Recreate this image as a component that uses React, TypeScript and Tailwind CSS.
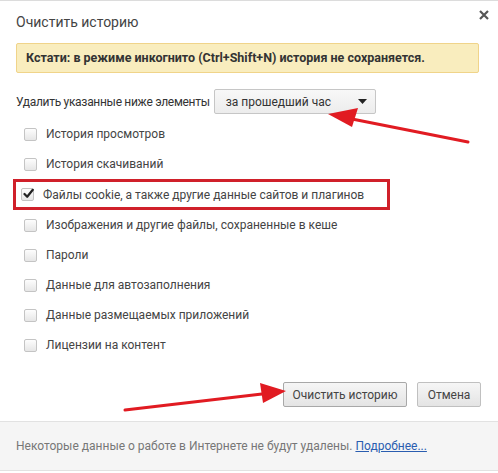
import React from "react";

const items = [
  { label: "История просмотров", checked: false },
  { label: "История скачиваний", checked: false },
  { label: "Файлы cookie, а также другие данные сайтов и плагинов", checked: true, highlight: true },
  { label: "Изображения и другие файлы, сохраненные в кеше", checked: false },
  { label: "Пароли", checked: false },
  { label: "Данные для автозаполнения", checked: false },
  { label: "Данные размещаемых приложений", checked: false },
  { label: "Лицензии на контент", checked: false },
];

function Checkbox({ checked }: { checked: boolean }) {
  return (
    <span className="relative flex h-[13px] w-[13px] shrink-0 items-center justify-center rounded-[2px] border border-[#c4c4c4] bg-gradient-to-b from-[#fdfdfd] to-[#e6e6e6]">
      {checked && (
        <svg width="11" height="11" viewBox="0 0 11 11" className="absolute -top-px left-px">
          <path d="M1.5 6 L4.2 8.8 L9.8 1.8" fill="none" stroke="#222" strokeWidth="2.2" strokeLinecap="round" strokeLinejoin="round" />
        </svg>
      )}
    </span>
  );
}

function Arrows() {
  return (
    <svg className="pointer-events-none absolute inset-0" width="498" height="473" viewBox="0 0 498 473">
      <line x1="468" y1="141" x2="352" y2="118" stroke="#e11b22" strokeWidth="3" strokeLinecap="round" />
      <polygon points="328,113 358,107 352,126" fill="#e11b22" />
      <line x1="125" y1="409" x2="262" y2="393" stroke="#e11b22" strokeWidth="3" strokeLinecap="round" />
      <polygon points="286,390 260,382 263,402" fill="#e11b22" />
    </svg>
  );
}

export default function App() {
  return (
    <div
      className="relative h-[473px] w-[498px] overflow-hidden border-t border-[#dcdcdc] bg-white text-[12px] text-[#333]"
      style={{ fontFamily: 'Roboto, "Noto Sans", sans-serif' }}
    >
      <div className="px-4">
        <div className="flex items-center justify-between pt-[11px]">
          <h1 className="text-[14px] leading-5 text-[#444]">Очистить историю</h1>
          <svg width="10" height="10" viewBox="0 0 10 10" className="-mr-[7px] -mt-[14px]">
            <path d="M1 1 L9 9 M9 1 L1 9" stroke="#555" strokeWidth="2.2" />
          </svg>
        </div>

        <div className="mt-[11px] flex h-[30px] w-[463px] items-center rounded-[2px] border border-[#f0d48a] bg-[#f9edbe] px-[9px] text-[12.5px] font-bold text-[#333]">
          Кстати: в режиме инкогнито (Ctrl+Shift+N) история не сохраняется.
        </div>

        <div className="mt-4 flex items-center">
          <span className="text-[12px] tracking-[-0.3px] text-[#333]">Удалить указанные ниже элементы</span>
          <div className="ml-[4px] flex h-[25px] w-[162px] items-center justify-between rounded-[2px] border border-[#c6c6c6] bg-gradient-to-b from-[#f8f8f8] to-[#ececec] pl-[11px] pr-[8px] text-[12px] text-[#333]">
            <span>за прошедший час</span>
            <svg width="9" height="5" viewBox="0 0 9 5">
              <polygon points="0,0 9,0 4.5,5" fill="#222" />
            </svg>
          </div>
        </div>

        <div className="mt-[5px] flex flex-col">
          {items.map((it) =>
            it.highlight ? (
              <div
                key={it.label}
                className="-ml-[3px] flex h-[31px] w-[377px] items-center gap-[9px] border-[3px] border-[#d0202a] pl-[5px]"
              >
                <Checkbox checked={it.checked} />
                <span className="whitespace-nowrap text-[12px] text-[#444]">{it.label}</span>
              </div>
            ) : (
              <div key={it.label} className="flex h-[30px] items-center gap-[9px] pl-[8px]">
                <Checkbox checked={it.checked} />
                <span className="whitespace-nowrap text-[12px] text-[#444]">{it.label}</span>
              </div>
            )
          )}
        </div>

        <div className="mt-[22px] flex justify-end gap-[10px] pr-[1px]">
          <button className="h-[25px] w-[124px] rounded-[2px] border border-[#a8a8a8] bg-gradient-to-b from-[#f6f6f6] to-[#e4e4e4] text-[12px] text-[#444]">
            Очистить историю
          </button>
          <button className="h-[25px] w-[64px] rounded-[2px] border border-[#c0c0c0] bg-gradient-to-b from-[#f6f6f6] to-[#e4e4e4] text-[12px] text-[#444]">
            Отмена
          </button>
        </div>
      </div>

      <div className="mt-[14px] flex h-[50px] items-center border-y border-[#e2e2e2] bg-[#f5f5f5] px-4 text-[12px] text-[#777]">
        <span>
          Некоторые данные о работе в Интернете не будут удалены.{" "}
          <a className="text-[#2a5db0] underline">Подробнее...</a>
        </span>
      </div>

      <Arrows />
    </div>
  );
}
